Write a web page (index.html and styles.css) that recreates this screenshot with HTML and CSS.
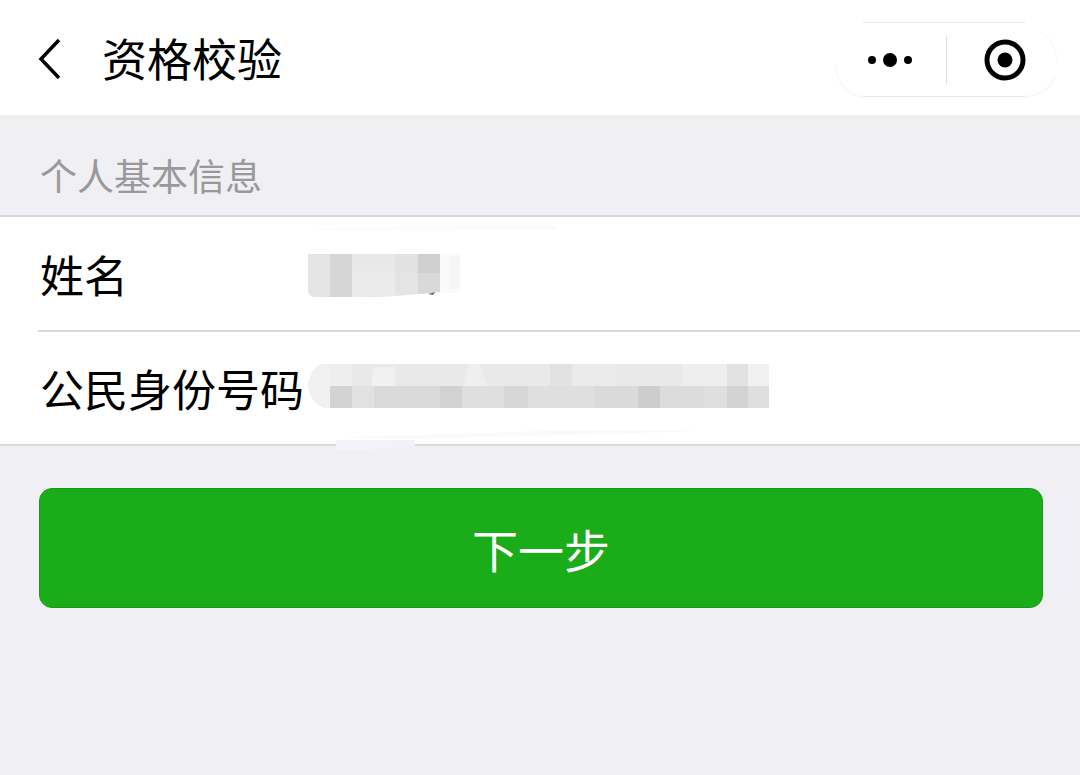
FILE: index.html
```html
<!DOCTYPE html>
<html lang="zh-cn">
<head>
  <meta charset="utf-8">
  <meta name="viewport" content="width=device-width, initial-scale=1.0">
  <title>资格校验</title>
  <link rel="stylesheet" href="styles.css">
</head>
<body>
  <header class="navbar">
    <button class="navbar-back" type="button" aria-label="返回">
      <svg width="24" height="42" viewBox="0 0 24 42">
        <path d="M21 3L3 22L21 41" fill="none" stroke="#000" stroke-width="3.5"/>
      </svg>
    </button>
    <h1>资格校验</h1>
    <div class="capsule">
      <!-- 胶囊边框：两侧圆角较淡 -->
      <svg class="capsule-frame" width="224" height="76" viewBox="0 0 224 76" fill="none">
        <path d="M29 .5H191M29 74.5H191" stroke="#e6e6e6"/>
        <path d="M1 42Q5 72 29 75M191 75Q214 72 221 55" stroke="#f9f9f9" stroke-width="2"/>
        <path d="M206 10Q222 20 223 40" stroke="#fafafa" stroke-width="2"/>
      </svg>
      <button type="button" aria-label="更多">
        <svg width="46" height="16" viewBox="0 0 46 16">
          <circle cx="5" cy="8" r="4"/>
          <circle cx="23" cy="8" r="7"/>
          <circle cx="41" cy="8" r="4"/>
        </svg>
      </button>
      <button type="button" aria-label="关闭">
        <svg width="42" height="42" viewBox="0 0 42 42">
          <circle cx="21" cy="21" r="18" fill="none" stroke="#000" stroke-width="5"/>
          <circle cx="21" cy="21" r="7.5"/>
        </svg>
      </button>
    </div>
  </header>
  <main>
    <h2>个人基本信息</h2>
    <dl class="cells">
      <div class="cell">
        <dt>姓名</dt>
        <dd>
          <svg width="160" height="46" viewBox="0 -2 160 46">
            <path d="M10 -24L150 -28H250V-23H10Z" fill="#fbfbfd"/>
            <path d="M1 1H133V39Q95 43 70 44H8Q1 44 1 37Z" fill="#e4e4e4"/>
            <path d="M23 1H45V44H23Z" fill="#d6d6d6"/>
            <path d="M45 1H88V18H45Z" fill="#e8e8e8"/>
            <path d="M45 18H88V43L45 44Z" fill="#ebebeb"/>
            <path d="M88 1H111V18H88Z" fill="#e2e2e2"/>
            <path d="M111 1H133V20H111Z" fill="#cfcfcf"/>
            <path d="M111 20H133V39L111 41Z" fill="#d9d9d9"/>
            <path d="M133 1H154L150 40H133Z" fill="#fafafa"/>
            <path d="M143 3H153V36H143Z" fill="#f6f6f6"/>
            <path d="M121 41L128 39L126 42Z" fill="#666"/>
          </svg>
        </dd>
      </div>
      <div class="cell">
        <dt>公民身份号码</dt>
        <dd>
          <svg width="464" height="50" viewBox="0 0 464 50">
            <path d="M29 77H108V83L60 87H29Z" fill="#f3f3f7"/>
            <path d="M30 74L240 68H400L110 76Z" fill="#fafafa"/>
            <path d="M14 1H462V23H1Q4 5 14 1Z" fill="#e9e9e9"/>
            <path d="M1 23H462V45H18Q5 41 1 23Z" fill="#dfdfdf"/>
            <path d="M14 1H23V45H18Q5 41 1 23Q4 5 14 1Z" fill="#f1f1f1"/>
            <path d="M23 1H45V23H23Z" fill="#eee"/>
            <path d="M67 4H88V23H64Z" fill="#f1f1f1"/>
            <path d="M162 1H173L180 23H156Z" fill="#efefef"/>
            <path d="M243 1H265V23H243Z" fill="#e2e2e2"/>
            <path d="M265 1H310V23H265Z" fill="#ebebeb"/>
            <path d="M375 1H420V23H375Z" fill="#eee"/>
            <path d="M420 1H441V23H420Z" fill="#e2e2e2"/>
            <path d="M441 1H462V23H441Z" fill="#f1f1f1"/>
            <path d="M23 23H45V45H23Z" fill="#d3d3d3"/>
            <path d="M45 23H67V45H45Z" fill="#e1e1e1"/>
            <path d="M67 23H133V45H67Z" fill="#dadada"/>
            <path d="M133 23H155V45H133Z" fill="#d2d2d2"/>
            <path d="M197 23H221V45H197Z" fill="#d7d7d7"/>
            <path d="M287 23H331V45H287Z" fill="#dadada"/>
            <path d="M331 23H353V45H331Z" fill="#cdcdcd"/>
            <path d="M353 23H397V45H353Z" fill="#dcdcdc"/>
            <path d="M420 23H441V45H420Z" fill="#d3d3d3"/>
          </svg>
        </dd>
      </div>
    </dl>
    <button class="btn-primary" type="button">下一步</button>
  </main>
</body>
</html>
```

FILE: styles.css
```css
:root {
  --color-primary: #1aad19;
  --color-bg: #efeff4;
  --color-line: #d9d9d9;
  --color-hint: #999;
}
* {
  box-sizing: border-box;
}
body {
  margin: 0;
  background-color: var(--color-bg);
  color: #000;
  font-family: "Noto Sans CJK SC", sans-serif;
}
button {
  border: none;
  padding: 0;
  font-family: inherit;
  cursor: pointer;
}
svg {
  display: block;
}
h1,
h2 {
  margin: 0;
  font-weight: 400;
}
.navbar {
  display: flex;
  align-items: center;
  height: 115px;
  padding: 0 22px 0 38px;
  background-color: #fff;
}
.navbar-back {
  margin-right: 40px;
  background-color: transparent;
}
.navbar h1 {
  flex: 1;
  font-size: 45px;
  line-height: 60px;
}
.capsule {
  position: relative;
  display: flex;
  width: 224px;
  height: 76px;
  margin-top: 4px;
}
.capsule-frame {
  position: absolute;
  top: 0;
  left: 0;
  pointer-events: none;
}
.capsule button {
  flex: 1;
  display: flex;
  justify-content: center;
  align-items: center;
  background-color: transparent;
}
/* 两个按钮之间的分隔线 */
.capsule button + button {
  padding-left: 5px;
  background: linear-gradient(#e0e0e0, #e0e0e0) left center / 1px 48px no-repeat;
}
.capsule button:first-of-type {
  flex: 0 0 112px;
}
main {
  border-top: 8px solid #f0f0f0;
}
main h2 {
  padding: 26px 40px 14px;
  color: var(--color-hint);
  font-size: 37px;
  line-height: 52px;
}
.cells {
  margin: 0;
  border-top: 2px solid var(--color-line);
  border-bottom: 2px solid var(--color-line);
  background-color: #fff;
}
.cell {
  display: flex;
  align-items: center;
  height: 113px;
  margin-left: 38px;
  padding-left: 2px;
}
.cell + .cell {
  height: 114px;
  border-top: 2px solid var(--color-line);
}
.cell dt {
  width: 267px;
  font-size: 44px;
  line-height: 60px;
}
.cell dd {
  margin: 0;
}
.cell svg {
  overflow: visible;
}
.btn-primary {
  display: block;
  width: calc(100% - 76px);
  height: 120px;
  margin: 42px 37px 0 39px;
  border: 1px solid #189a18;
  border-radius: 13px;
  background-color: var(--color-primary);
  color: #fff;
  font-size: 46px;
}
```
